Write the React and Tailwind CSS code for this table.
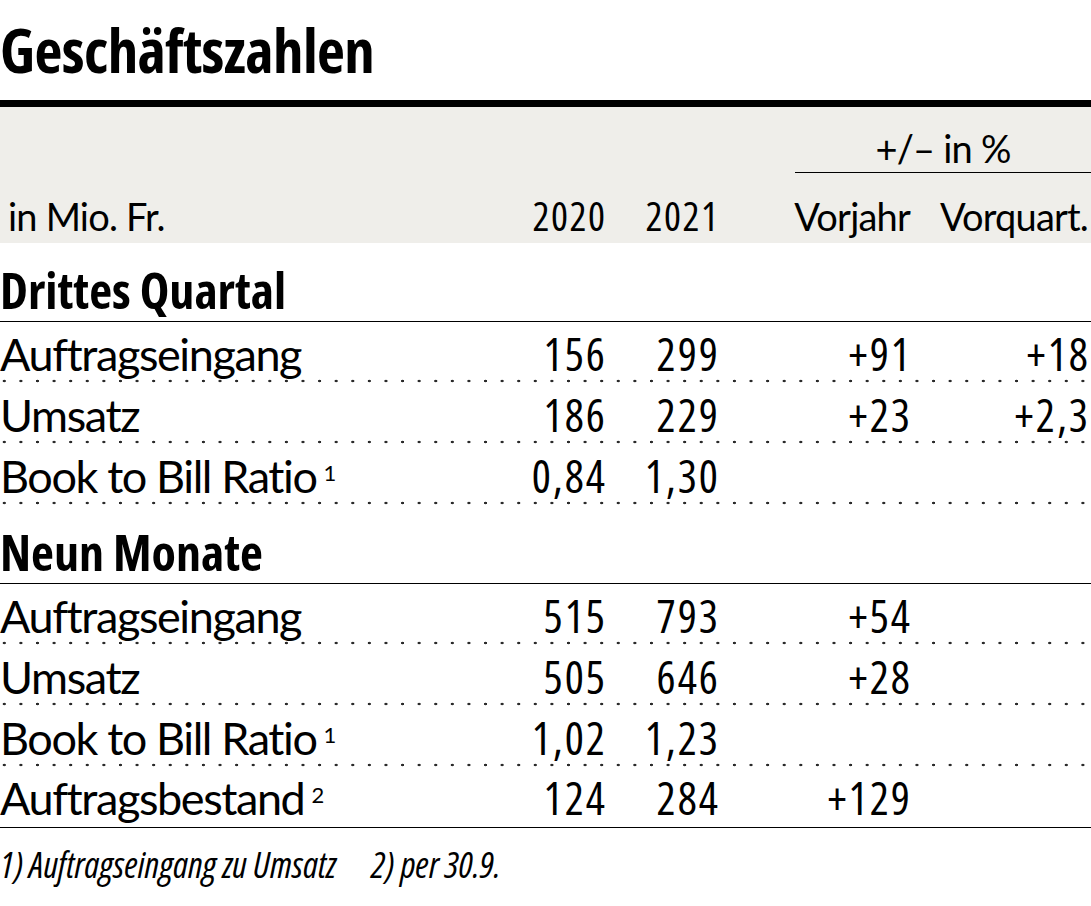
const label = "font-['Lato',sans-serif] text-[45px] leading-[1.2] tracking-[-1.4px] text-black whitespace-nowrap";
const head = "font-['Lato',sans-serif] text-[38px] leading-[1.2] tracking-[-0.8px] text-black whitespace-nowrap";
const num = "font-['Open_Sans',sans-serif] [font-stretch:condensed] text-[45px] leading-[1.2] tracking-[2px] -mr-[2px] text-black text-right whitespace-nowrap";
const headNum = "font-['Open_Sans',sans-serif] [font-stretch:condensed] text-[40px] leading-[1.2] tracking-[1.5px] -mr-[1.5px] text-black text-right whitespace-nowrap";
const grid = "grid grid-cols-[1fr_125px_113px_192px_178px] pr-[3px] items-end";
const dotted = "bg-[radial-gradient(circle,#2a2a2a_1.1px,transparent_1.6px)] bg-[length:16.6px_4px] bg-repeat-x bg-[position:-4px_100%]";
const section = "font-['Open_Sans',sans-serif] [font-stretch:condensed] font-bold text-[50px] leading-[1.2] text-black whitespace-nowrap";

const sections = [
  {
    title: 'Drittes Quartal',
    rows: [
      ['Auftragseingang', '156', '299', '+91', '+18'],
      ['Umsatz', '186', '229', '+23', '+2,3'],
      ['Book to Bill Ratio', '0,84', '1,30', '', '', '1'],
    ],
  },
  {
    title: 'Neun Monate',
    rows: [
      ['Auftragseingang', '515', '793', '+54', ''],
      ['Umsatz', '505', '646', '+28', ''],
      ['Book to Bill Ratio', '1,02', '1,23', '', '', '1'],
      ['Auftragsbestand', '124', '284', '+129', '', '2'],
    ],
  },
];

export default function App() {
  return (
    <div className="w-[1091px] h-[906px] bg-white overflow-hidden">
      <div className="h-[100px] pt-[19px]">
        <h1 className="font-['Open_Sans',sans-serif] [font-stretch:condensed] font-bold text-[61px] leading-[61px] text-black tracking-[-0.6px]">
          Geschäftszahlen
        </h1>
      </div>
      <div className="h-[7px] bg-black" />

      <div className="bg-[#efeeea] h-[136px]">
        <div className={`${grid} h-[66px]`}>
          <div className="col-start-4 col-span-2 ml-[77px] -mr-[3px] border-b border-black text-center">
            <span className={head}>+/– in %</span>
          </div>
        </div>
        <div className={`${grid} h-[70px] pb-[3px]`}>
          <div className={`${head} pl-[8px]`}>in Mio. Fr.</div>
          <div className={headNum}>2020</div>
          <div className={headNum}>2021</div>
          <div className={`${head} text-right`}>Vorjahr</div>
          <div className={`${head} text-right`}>Vorquart.</div>
        </div>
      </div>

      {sections.map((s, si) => (
        <div key={s.title}>
          <div className="h-[79px] border-b border-black flex items-end pb-[1px]">
            <span className={section}>{s.title}</span>
          </div>
          {s.rows.map((r, ri) => {
            const last = si === sections.length - 1 && ri === s.rows.length - 1;
            return (
              <div
                key={ri}
                className={`${grid} h-[61px] pb-[2px] ${last ? 'border-b border-black' : dotted}`}
              >
                <div className={label}>
                  {r[0]}
                  {r[5] && <sup className="text-[22px] tracking-normal ml-[7px] relative -top-[12px]">{r[5]}</sup>}
                </div>
                <div className={num}>{r[1]}</div>
                <div className={num}>{r[2]}</div>
                <div className={num}>{r[3]}</div>
                <div className={num}>{r[4]}</div>
              </div>
            );
          })}
        </div>
      ))}

      <div className="pt-[15px] flex gap-[35px] font-['Open_Sans',sans-serif] [font-stretch:condensed] italic text-[36px] leading-[1.2] text-black whitespace-nowrap">
        <span>1) Auftragseingang zu Umsatz</span>
        <span>2) per 30.9.</span>
      </div>
    </div>
  );
}
